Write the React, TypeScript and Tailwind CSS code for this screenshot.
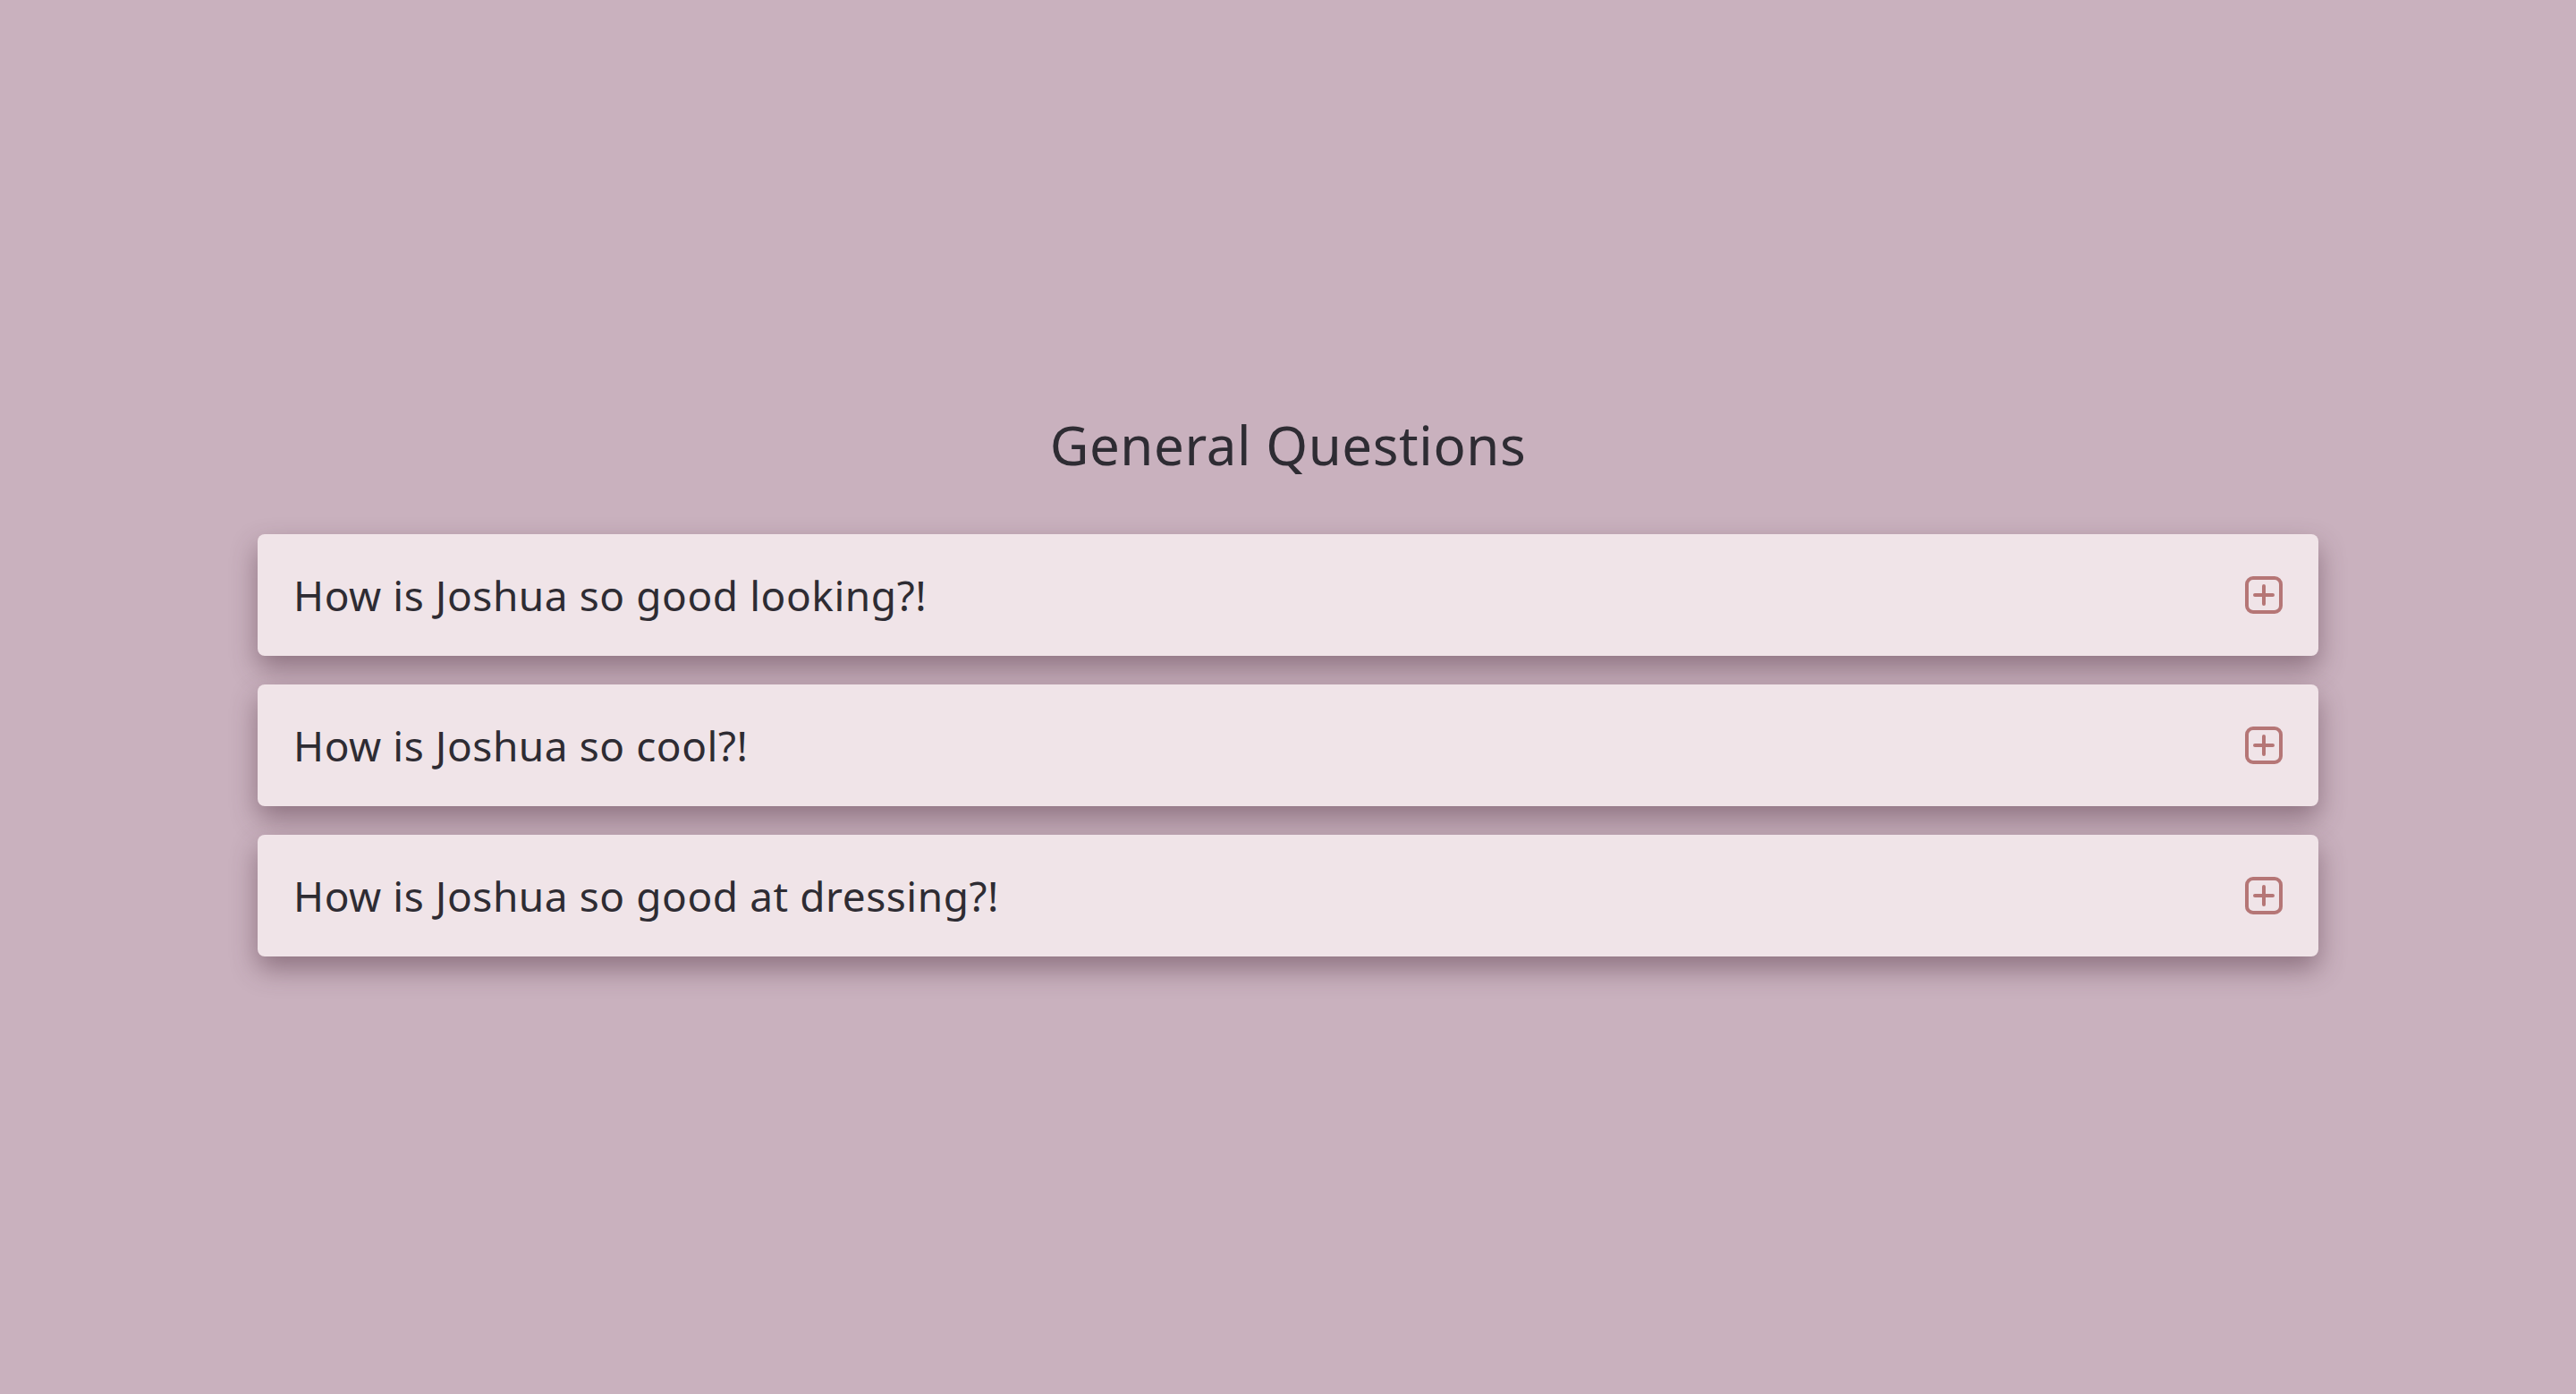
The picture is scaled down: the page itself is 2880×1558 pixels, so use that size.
// FAQ accordion: centred title and three collapsed question cards.

const QUESTIONS = [
  "How is Joshua so good looking?!",
  "How is Joshua so cool?!",
  "How is Joshua so good at dressing?!",
];

function PlusSquare() {
  return (
    <svg width="42" height="42" viewBox="0 0 42 42" fill="none" className="shrink-0">
      <rect x="2" y="2" width="38" height="38" rx="7" stroke="#b57676" strokeWidth="4" />
      <path d="M21 11v20M11 21h20" stroke="#b57676" strokeWidth="4" strokeLinecap="round" />
    </svg>
  );
}

export default function App() {
  return (
    <div
      className="min-h-screen w-full bg-[#c9b1be] pt-[461px] text-[#2e2c33]"
      style={{ fontFamily: '"Noto Sans", "Open Sans", sans-serif' }}
    >
      <h1 className="text-center text-[60px] leading-[72px] font-normal tracking-[0.6px]">
        General Questions
      </h1>

      <ul className="mx-auto mt-[64px] flex w-[2304px] flex-col gap-[32px] list-none">
        {QUESTIONS.map((q) => (
          <li
            key={q}
            className="flex h-[136px] items-center justify-between rounded-lg bg-[#f0e4e8] pl-[40px] pr-[40px] shadow-[0_14px_30px_rgba(70,40,55,0.45)]"
          >
            <span className="text-[46px] leading-none tracking-[0.55px]">{q}</span>
            <PlusSquare />
          </li>
        ))}
      </ul>
    </div>
  );
}
